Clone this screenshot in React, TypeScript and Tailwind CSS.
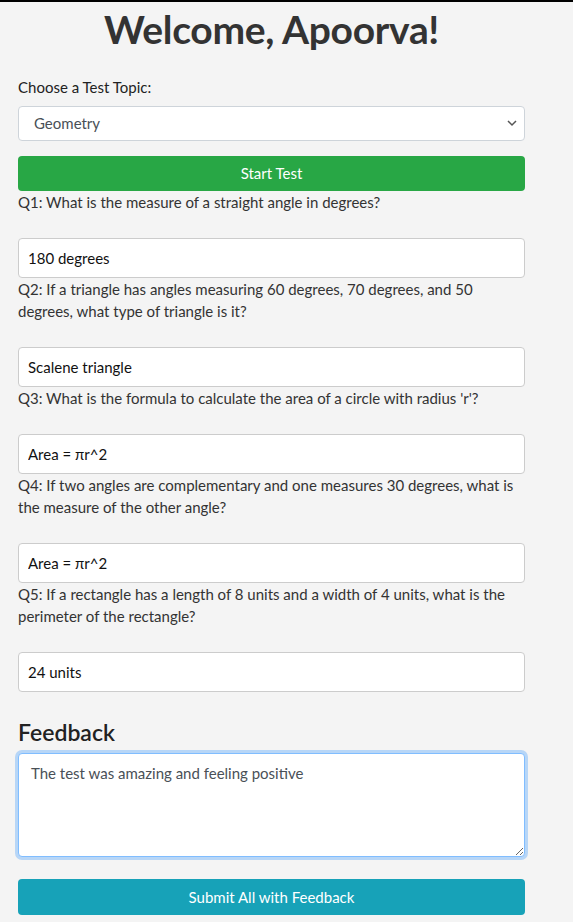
import React from "react";

const questions = [
  { q: "Q1: What is the measure of a straight angle in degrees?", a: "180 degrees" },
  {
    q: "Q2: If a triangle has angles measuring 60 degrees, 70 degrees, and 50 degrees, what type of triangle is it?",
    a: "Scalene triangle",
  },
  { q: "Q3: What is the formula to calculate the area of a circle with radius 'r'?", a: "Area = πr^2" },
  {
    q: "Q4: If two angles are complementary and one measures 30 degrees, what is the measure of the other angle?",
    a: "Area = πr^2",
  },
  {
    q: "Q5: If a rectangle has a length of 8 units and a width of 4 units, what is the perimeter of the rectangle?",
    a: "24 units",
  },
];

export default function App() {
  return (
    <div
      className="min-h-[922px] bg-[#f4f4f4] border-t-2 border-black text-[#333]"
      style={{ fontFamily: "Lato, 'Noto Sans', sans-serif" }}
    >
      <div className="w-[507px] ml-[18px]">
        <h1 className="text-center text-[39px] leading-[48px] font-bold tracking-[-0.3px] text-[#333] pt-[3px]">
          Welcome, Apoorva!
        </h1>

        <label className="block mt-[23px] text-[15px] leading-[22px] text-[#222]">Choose a Test Topic:</label>
        <div className="relative mt-[8px]">
          <select
            defaultValue="Geometry"
            className="w-full h-[35px] appearance-none bg-white border border-[#ced4da] rounded-[4px] pl-[15px] text-[15px] text-[#495057] outline-none"
          >
            <option>Geometry</option>
            <option>Algebra</option>
            <option>Trigonometry</option>
          </select>
          <svg
            className="absolute right-[8px] top-[13px]"
            width="10"
            height="8"
            viewBox="0 0 10 8"
            fill="none"
          >
            <path d="M1 2l4 4 4-4" stroke="#555" strokeWidth="1.5" />
          </svg>
        </div>

        <button className="w-full h-[35px] mt-[15px] bg-[#28a745] text-white text-[15px] rounded-[4px]">
          Start Test
        </button>

        {questions.map((item) => (
          <div key={item.q}>
            <p className="text-[15px] leading-[22px] text-[#333] mb-[25px]">{item.q}</p>
            <input
              readOnly
              value={item.a}
              className="w-full h-[40px] bg-white border border-[#ccc] rounded-[4px] px-[9px] text-[15px] text-[#111] outline-none"
            />
          </div>
        ))}

        <h2 className="mt-[26px] text-[23px] leading-[28px] font-semibold text-[#222]">Feedback</h2>
        <textarea
          readOnly
          value="The test was amazing and feeling positive"
          className="block w-full h-[104px] mt-[7px] bg-white border border-[#80bdff] rounded-[4px] px-[12px] py-[8px] text-[15px] text-[#495057] outline-none shadow-[0_0_0_3px_rgba(0,123,255,0.25)]"
        />

        <button className="w-full h-[36px] mt-[22px] bg-[#17a2b8] text-white text-[15px] rounded-[4px]">
          Submit All with Feedback
        </button>
      </div>
    </div>
  );
}
